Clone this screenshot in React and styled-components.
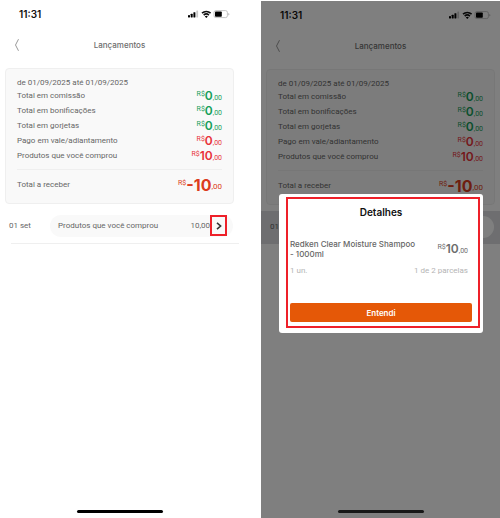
import { useState } from "react";
import styled, { createGlobalStyle } from "styled-components";

const GlobalStyle = createGlobalStyle`
  * {
    box-sizing: border-box;
  }
  body {
    margin: 0;
    background-color: #fff;
    color: #666;
    font-family: Roboto, "Liberation Sans", sans-serif;
    font-size: 8px;
    line-height: 11px;
  }
  h1, h2, p, ul, dl, dd {
    margin: 0;
    padding: 0;
  }
  h1, h2, h3, strong {
    font-family: Inter, sans-serif;
  }
  button {
    border: 0;
    padding: 0;
    background: none;
    font-family: Inter, sans-serif;
    cursor: pointer;
  }
`;

const Board = styled.main`
  display: grid;
  grid-template-columns: 1fr 1fr;
  gap: 22px;
  min-height: 100vh;
`;

const Phone = styled.section`
  position: relative;
  display: flex;
  flex-direction: column;
  min-width: 0;
  margin-top: ${(props) => (props.$dimmed ? "1px" : "0")};
  overflow: hidden;
`;

const StatusBar = styled.div`
  display: flex;
  justify-content: space-between;
  align-items: center;
  height: 28px;
  padding: 0 9px 0 19px;
  color: #111;
  font-family: Inter, sans-serif;
  font-size: 10px;
  font-weight: 600;
`;

const StatusIcons = styled.svg`
  width: 42px;
  height: 10px;
`;

const Header = styled.header`
  display: grid;
  grid-template-columns: 20px 1fr 20px;
  align-items: center;
  height: 34px;
  padding: 0 12px;
`;

const BackButton = styled.button`
  display: flex;
  height: 14px;
  svg {
    width: 9px;
    height: 14px;
  }
`;

const ScreenTitle = styled.h1`
  color: #6d6d6d;
  font-size: 8px;
  font-weight: 500;
  text-align: center;
`;

const Summary = styled.div`
  margin: 6px 5px 0;
  padding: 8px 11px 4px;
  border: 1px solid #efefef;
  border-radius: 4px;
  background-color: #f9f9f9;
`;

const SummaryList = styled.dl`
  display: grid;
  grid-auto-rows: 15px;
  padding-bottom: 6px;
`;

const SummaryRow = styled.div`
  display: flex;
  justify-content: space-between;
  align-items: center;
`;

const TotalRow = styled(SummaryRow)`
  height: 30px;
  border-top: 1px solid #efefef;
`;

const colors = {
  green: "#17a05a",
  red: "#e8323a",
  total: "#dc3c20",
  gray: "#6d6d6d",
};

const Money = styled.span`
  display: flex;
  align-items: flex-start;
  color: ${(props) => colors[props.$tone]};
  font-size: 7px;
  line-height: 8px;
  strong {
    font-size: ${(props) => (props.$big ? "16px" : "12px")};
    font-weight: ${(props) => (props.$big ? 700 : 600)};
    line-height: 12px;
  }
  small {
    align-self: flex-end;
    font-size: ${(props) => (props.$big ? "8px" : "7px")};
  }
`;

const EntryRow = styled.div`
  display: grid;
  grid-template-columns: 41px 1fr;
  align-items: center;
  margin-top: 6px;
  height: 33px;
  padding: 0 6px 2px 9px;
  background-color: ${(props) => (props.$active ? "#dcdde0" : "#fff")};
`;

const EntryPill = styled.div`
  display: flex;
  align-items: center;
  height: 22px;
  padding: 0 6px 0 8px;
  border-radius: 11px;
  background-color: ${(props) => (props.$active ? "#fff" : "#f9f9f9")};
  p {
    flex: 1;
  }
`;

const OpenButton = styled.button`
  display: flex;
  justify-content: center;
  align-items: center;
  width: 17px;
  height: 21px;
  border: ${(props) => (props.$marked ? "2px solid #ee2029" : "0")};
  svg {
    width: 6px;
    height: 8px;
  }
`;

const EntryLine = styled.div`
  height: 1px;
  margin-left: 11px;
  background-color: #efefef;
`;

const HomeIndicator = styled.div`
  width: 86px;
  height: 3px;
  margin: auto auto 5px;
  border-radius: 2px;
  background-color: ${(props) => (props.$dimmed ? "#303030" : "#000")};
`;

const Backdrop = styled.div`
  position: absolute;
  inset: 0;
  display: flex;
  justify-content: center;
  align-items: center;
  padding: 8px 17px 0 18px;
  background-color: rgba(0, 0, 0, 0.5);
`;

const Dialog = styled.div`
  width: 100%;
  padding: 3px 3px 5px 7px;
  border-radius: 3px;
  background-color: #fff;
`;

const DialogFrame = styled.div`
  display: flex;
  flex-direction: column;
  padding: 7px 6px 4px 2px;
  border: 2px solid #ee2029;
`;

const DialogTitle = styled.h2`
  color: #111;
  font-size: 10px;
  font-weight: 600;
  line-height: 13px;
  text-align: center;
`;

const Product = styled.div`
  display: flex;
  justify-content: space-between;
  align-items: center;
  margin-top: 20px;
  padding-right: 4px;
  h3 {
    width: 128px;
    margin: 0;
    font-size: 8px;
    font-weight: 500;
    line-height: 10px;
  }
`;

const ProductMeta = styled.div`
  display: flex;
  justify-content: space-between;
  margin: 6px 4px 27px 0;
  color: #b4b4b4;
`;

const ConfirmButton = styled.button`
  height: 19px;
  border-radius: 2px;
  background-color: #e55807;
  color: #fff;
  font-size: 8px;
  font-weight: 600;
`;

const totals = [
  { label: "Total em comissão", value: "0", tone: "green" },
  { label: "Total em bonificações", value: "0", tone: "green" },
  { label: "Total em gorjetas", value: "0", tone: "green" },
  { label: "Pago em vale/adiantamento", value: "0", tone: "red" },
  { label: "Produtos que você comprou", value: "10", tone: "red" },
];

const Price = ({ value, tone, big }) => (
  <Money $tone={tone} $big={big}>
    R$<strong>{value}</strong>
    <small>,00</small>
  </Money>
);

const Status = () => (
  <StatusBar>
    <span>11:31</span>
    <StatusIcons viewBox="0 0 42 10" aria-hidden="true">
      <rect x="0" y="6" width="2" height="2.4" rx=".4" />
      <rect x="2.7" y="4.8" width="2" height="3.6" rx=".4" />
      <rect x="5.4" y="3.2" width="2" height="5.2" rx=".4" />
      <rect x="8.3" y="1.6" width="1.8" height="6.8" rx=".4" fill="#c9c9c9" />
      <g fill="none" stroke="#111" strokeWidth="1.6">
        <path d="M14 4.2a6.2 6.2 0 0 1 8.6 0" />
        <path d="M15.7 6.1a3.8 3.8 0 0 1 5.2 0" />
      </g>
      <path d="M16.8 7.4a2.1 2.1 0 0 1 3 0L18.3 9z" />
      <rect x="26" y="1.6" width="13.4" height="7" rx="1.8" fill="none" stroke="#b5b5b5" strokeWidth=".8" />
      <rect x="27" y="2.5" width="6.8" height="5.2" rx=".8" />
      <path d="M40.3 4v2.4q1.1-.3 1.1-1.2T40.3 4z" fill="#b5b5b5" />
    </StatusIcons>
  </StatusBar>
);

const Screen = ({ active, onOpen, children }) => (
  <Phone $dimmed={active}>
    <Status />
    <Header>
      <BackButton aria-label="Voltar">
        <svg viewBox="0 0 9 14" fill="none" stroke="#9a9a9a">
          <path d="M6.5 1.2 3.5 7l3 5.8" />
        </svg>
      </BackButton>
      <ScreenTitle>Lançamentos</ScreenTitle>
    </Header>
    <Summary>
      <p>de 01/09/2025 até 01/09/2025</p>
      <SummaryList>
        {totals.map((total) => (
          <SummaryRow key={total.label}>
            <dt>{total.label}</dt>
            <dd>
              <Price value={total.value} tone={total.tone} />
            </dd>
          </SummaryRow>
        ))}
      </SummaryList>
      <TotalRow>
        <span>Total a receber</span>
        <Price value="-10" tone="total" big />
      </TotalRow>
    </Summary>
    <EntryRow $active={active}>
      <span>01 set</span>
      <EntryPill $active={active}>
        <p>Produtos que você comprou</p>
        <span>10,00</span>
        <OpenButton $marked={!active} onClick={onOpen} aria-label="Ver detalhes">
          <svg viewBox="0 0 6 8" fill="none" stroke="#333" strokeWidth="1.6">
            <path d="M1 .8 4.6 4 1 7.2" />
          </svg>
        </OpenButton>
      </EntryPill>
    </EntryRow>
    {!active && <EntryLine />}
    <HomeIndicator $dimmed={active} />
    {children}
  </Phone>
);

export default function App() {
  const [open, setOpen] = useState(true);

  return (
    <>
      <GlobalStyle />
      <Board>
        <Screen onOpen={() => setOpen(true)} />
        <Screen active onOpen={() => setOpen(true)}>
          {open && (
            <Backdrop>
              <Dialog role="dialog" aria-labelledby="details">
                <DialogFrame>
                  <DialogTitle id="details">Detalhes</DialogTitle>
                  <Product>
                    <h3>Redken Clear Moisture Shampoo - 1000ml</h3>
                    <Price value="10" tone="gray" />
                  </Product>
                  <ProductMeta>
                    <span>1 un.</span>
                    <span>1 de 2 parcelas</span>
                  </ProductMeta>
                  <ConfirmButton onClick={() => setOpen(false)}>
                    Entendi
                  </ConfirmButton>
                </DialogFrame>
              </Dialog>
            </Backdrop>
          )}
        </Screen>
      </Board>
    </>
  );
}
